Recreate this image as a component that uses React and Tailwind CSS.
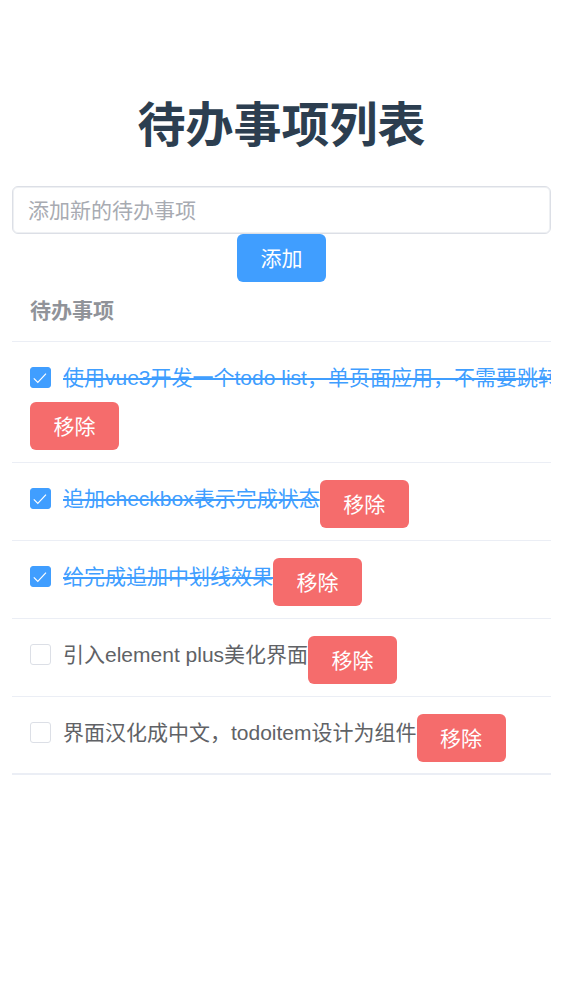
import { useState } from "react";

const initialTodos = [
  { id: 1, text: "使用vue3开发一个todo list，单页面应用，不需要跳转页面", done: true, stacked: true },
  { id: 2, text: "追加checkbox表示完成状态", done: true },
  { id: 3, text: "给完成追加中划线效果", done: true },
  { id: 4, text: "引入element plus美化界面", done: false },
  { id: 5, text: "界面汉化成中文，todoitem设计为组件", done: false },
];

const buttonClass =
  "h-12 min-w-[89px] shrink-0 rounded-md px-[22px] pt-[2px] text-[21px] leading-6 text-white";

function TodoItem({ todo, onToggle, onRemove }) {
  return (
    <div className="flex flex-wrap">
      <label className="flex h-12 shrink-0 cursor-pointer items-center gap-3 whitespace-nowrap">
        <span className="grid size-[21px] shrink-0">
          <input
            type="checkbox"
            checked={todo.done}
            onChange={onToggle}
            className="peer col-start-1 row-start-1 size-[21px] appearance-none rounded-[3px] border border-[#dcdfe6] bg-white checked:border-[#409eff] checked:bg-[#409eff]"
          />
          <svg
            viewBox="0 0 21 21"
            fill="none"
            stroke="white"
            strokeWidth="1.2"
            aria-hidden="true"
            className="pointer-events-none invisible col-start-1 row-start-1 size-[21px] peer-checked:visible"
          >
            <path d="M3.8 11.3 L7.8 15.3 L16 6.7" />
          </svg>
        </span>
        <span
          className={
            todo.done
              ? "text-[#409eff] line-through decoration-2"
              : "text-[#606266]"
          }
        >
          {todo.text}
        </span>
      </label>
      <button
        type="button"
        onClick={onRemove}
        className={`${buttonClass} bg-[#f56c6c] ${todo.stacked ? "" : "mt-[5px]"}`}
      >
        移除
      </button>
    </div>
  );
}

export default function App() {
  const [todos, setTodos] = useState(initialTodos);
  const [draft, setDraft] = useState("");

  const add = (event) => {
    event.preventDefault();
    const text = draft.trim();
    if (!text) return;
    setTodos([...todos, { id: Date.now(), text, done: false }]);
    setDraft("");
  };
  const toggle = (id) =>
    setTodos(todos.map((t) => (t.id === id ? { ...t, done: !t.done } : t)));
  const remove = (id) => setTodos(todos.filter((t) => t.id !== id));

  return (
    <main
      lang="zh-CN"
      className="min-h-screen bg-white px-3 pt-[94px] font-['Liberation_Sans','Noto_Sans_CJK_SC',sans-serif] text-[21px] leading-8"
    >
      <h1 className="text-center text-5xl leading-[64px] font-bold text-[#2c3e50]">
        待办事项列表
      </h1>
      <form onSubmit={add} className="mt-7 flex flex-col items-center">
        <input
          type="text"
          aria-label="添加新的待办事项"
          placeholder="添加新的待办事项"
          value={draft}
          onChange={(event) => setDraft(event.target.value)}
          className="h-12 w-full rounded-md border border-[#dcdfe6] px-[15px] pt-[2px] text-[#606266] inset-ring inset-ring-[#eef0f3] outline-none placeholder:text-[#a8abb2]"
        />
        <button type="submit" className={`${buttonClass} bg-[#409eff]`}>
          添加
        </button>
      </form>
      <div className="overflow-hidden border-b-2 border-[#ebeef5]">
        <table className="w-full table-fixed text-left">
          <thead>
            <tr className="border-b border-[#ebeef5]">
              <th className="h-[59px] px-[18px] font-bold text-[#909399]">待办事项</th>
            </tr>
          </thead>
          <tbody>
            {todos.map((todo) => (
              <tr key={todo.id} className="group border-b border-[#ebeef5] last:border-b-0">
                <td className="px-[18px] pt-3 pb-3 group-last:pb-[11px]">
                  <TodoItem
                    todo={todo}
                    onToggle={() => toggle(todo.id)}
                    onRemove={() => remove(todo.id)}
                  />
                </td>
              </tr>
            ))}
          </tbody>
        </table>
      </div>
    </main>
  );
}
